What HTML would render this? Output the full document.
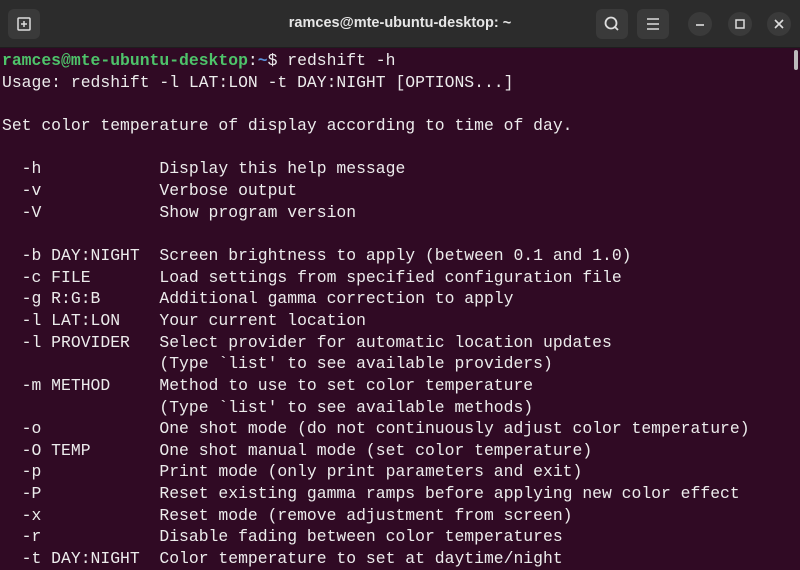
<!DOCTYPE html>
<html><head><style>
body{margin:0;width:800px;height:570px;overflow:hidden;background:#300a24;font-family:"Liberation Sans",sans-serif}
.hdr{position:absolute;left:0;top:0;width:800px;height:47px;background:#2c2c2c;border-bottom:1px solid #1e1e1e}
.btn{position:absolute;top:9px;width:32px;height:30px;border-radius:6px;background:#3a3a3a}
.cb{position:absolute;top:12px;width:24px;height:24px;border-radius:12px;background:#3a3a3a}
.title{position:absolute;top:15px;left:0;width:800px;text-align:center;color:#e6e6e6;font-size:14.5px;font-weight:bold}
pre{position:absolute;left:2px;top:50px;margin:0;font-family:"Liberation Mono",monospace;font-size:16.4px;line-height:21.65px;color:#ececec}
.g{color:#4ec36a;font-weight:bold}.b{color:#5a8fd8;font-weight:bold}
</style></head><body>
<div class="hdr">
<div class="btn" style="left:8px"><svg width="32" height="30"><rect x="10" y="9" width="12" height="12" fill="none" stroke="#ddd" stroke-width="1.5" rx="1"/><path d="M16 12v6M13 15h6" stroke="#ddd" stroke-width="1.5"/></svg></div>
<div class="title">ramces@mte-ubuntu-desktop: ~</div>
<div class="btn" style="left:596px"><svg width="32" height="30"><circle cx="15" cy="14" r="5.5" fill="none" stroke="#ddd" stroke-width="1.8"/><path d="M19 18l3 3" stroke="#ddd" stroke-width="1.8"/></svg></div>
<div class="btn" style="left:637px"><svg width="32" height="30"><path d="M10 10h12M10 15h12M10 20h12" stroke="#ddd" stroke-width="1.6"/></svg></div>
<div class="cb" style="left:688px"><svg width="24" height="24"><path d="M8 13h8" stroke="#ddd" stroke-width="1.6"/></svg></div>
<div class="cb" style="left:728px"><svg width="24" height="24"><rect x="8" y="8" width="8" height="8" fill="none" stroke="#ddd" stroke-width="1.5"/></svg></div>
<div class="cb" style="left:767px"><svg width="24" height="24"><path d="M8 8l8 8M16 8l-8 8" stroke="#ddd" stroke-width="1.6"/></svg></div>
</div>
<div style="position:absolute;left:794px;top:50px;width:4px;height:20px;background:#bbb;border-radius:2px"></div>
<pre><span class="g">ramces@mte-ubuntu-desktop</span>:<span class="b">~</span>$ redshift -h
Usage: redshift -l LAT:LON -t DAY:NIGHT [OPTIONS...]

Set color temperature of display according to time of day.

  -h            Display this help message
  -v            Verbose output
  -V            Show program version

  -b DAY:NIGHT  Screen brightness to apply (between 0.1 and 1.0)
  -c FILE       Load settings from specified configuration file
  -g R:G:B      Additional gamma correction to apply
  -l LAT:LON    Your current location
  -l PROVIDER   Select provider for automatic location updates
                (Type `list' to see available providers)
  -m METHOD     Method to use to set color temperature
                (Type `list' to see available methods)
  -o            One shot mode (do not continuously adjust color temperature)
  -O TEMP       One shot manual mode (set color temperature)
  -p            Print mode (only print parameters and exit)
  -P            Reset existing gamma ramps before applying new color effect
  -x            Reset mode (remove adjustment from screen)
  -r            Disable fading between color temperatures
  -t DAY:NIGHT  Color temperature to set at daytime/night</pre>
</body></html>
